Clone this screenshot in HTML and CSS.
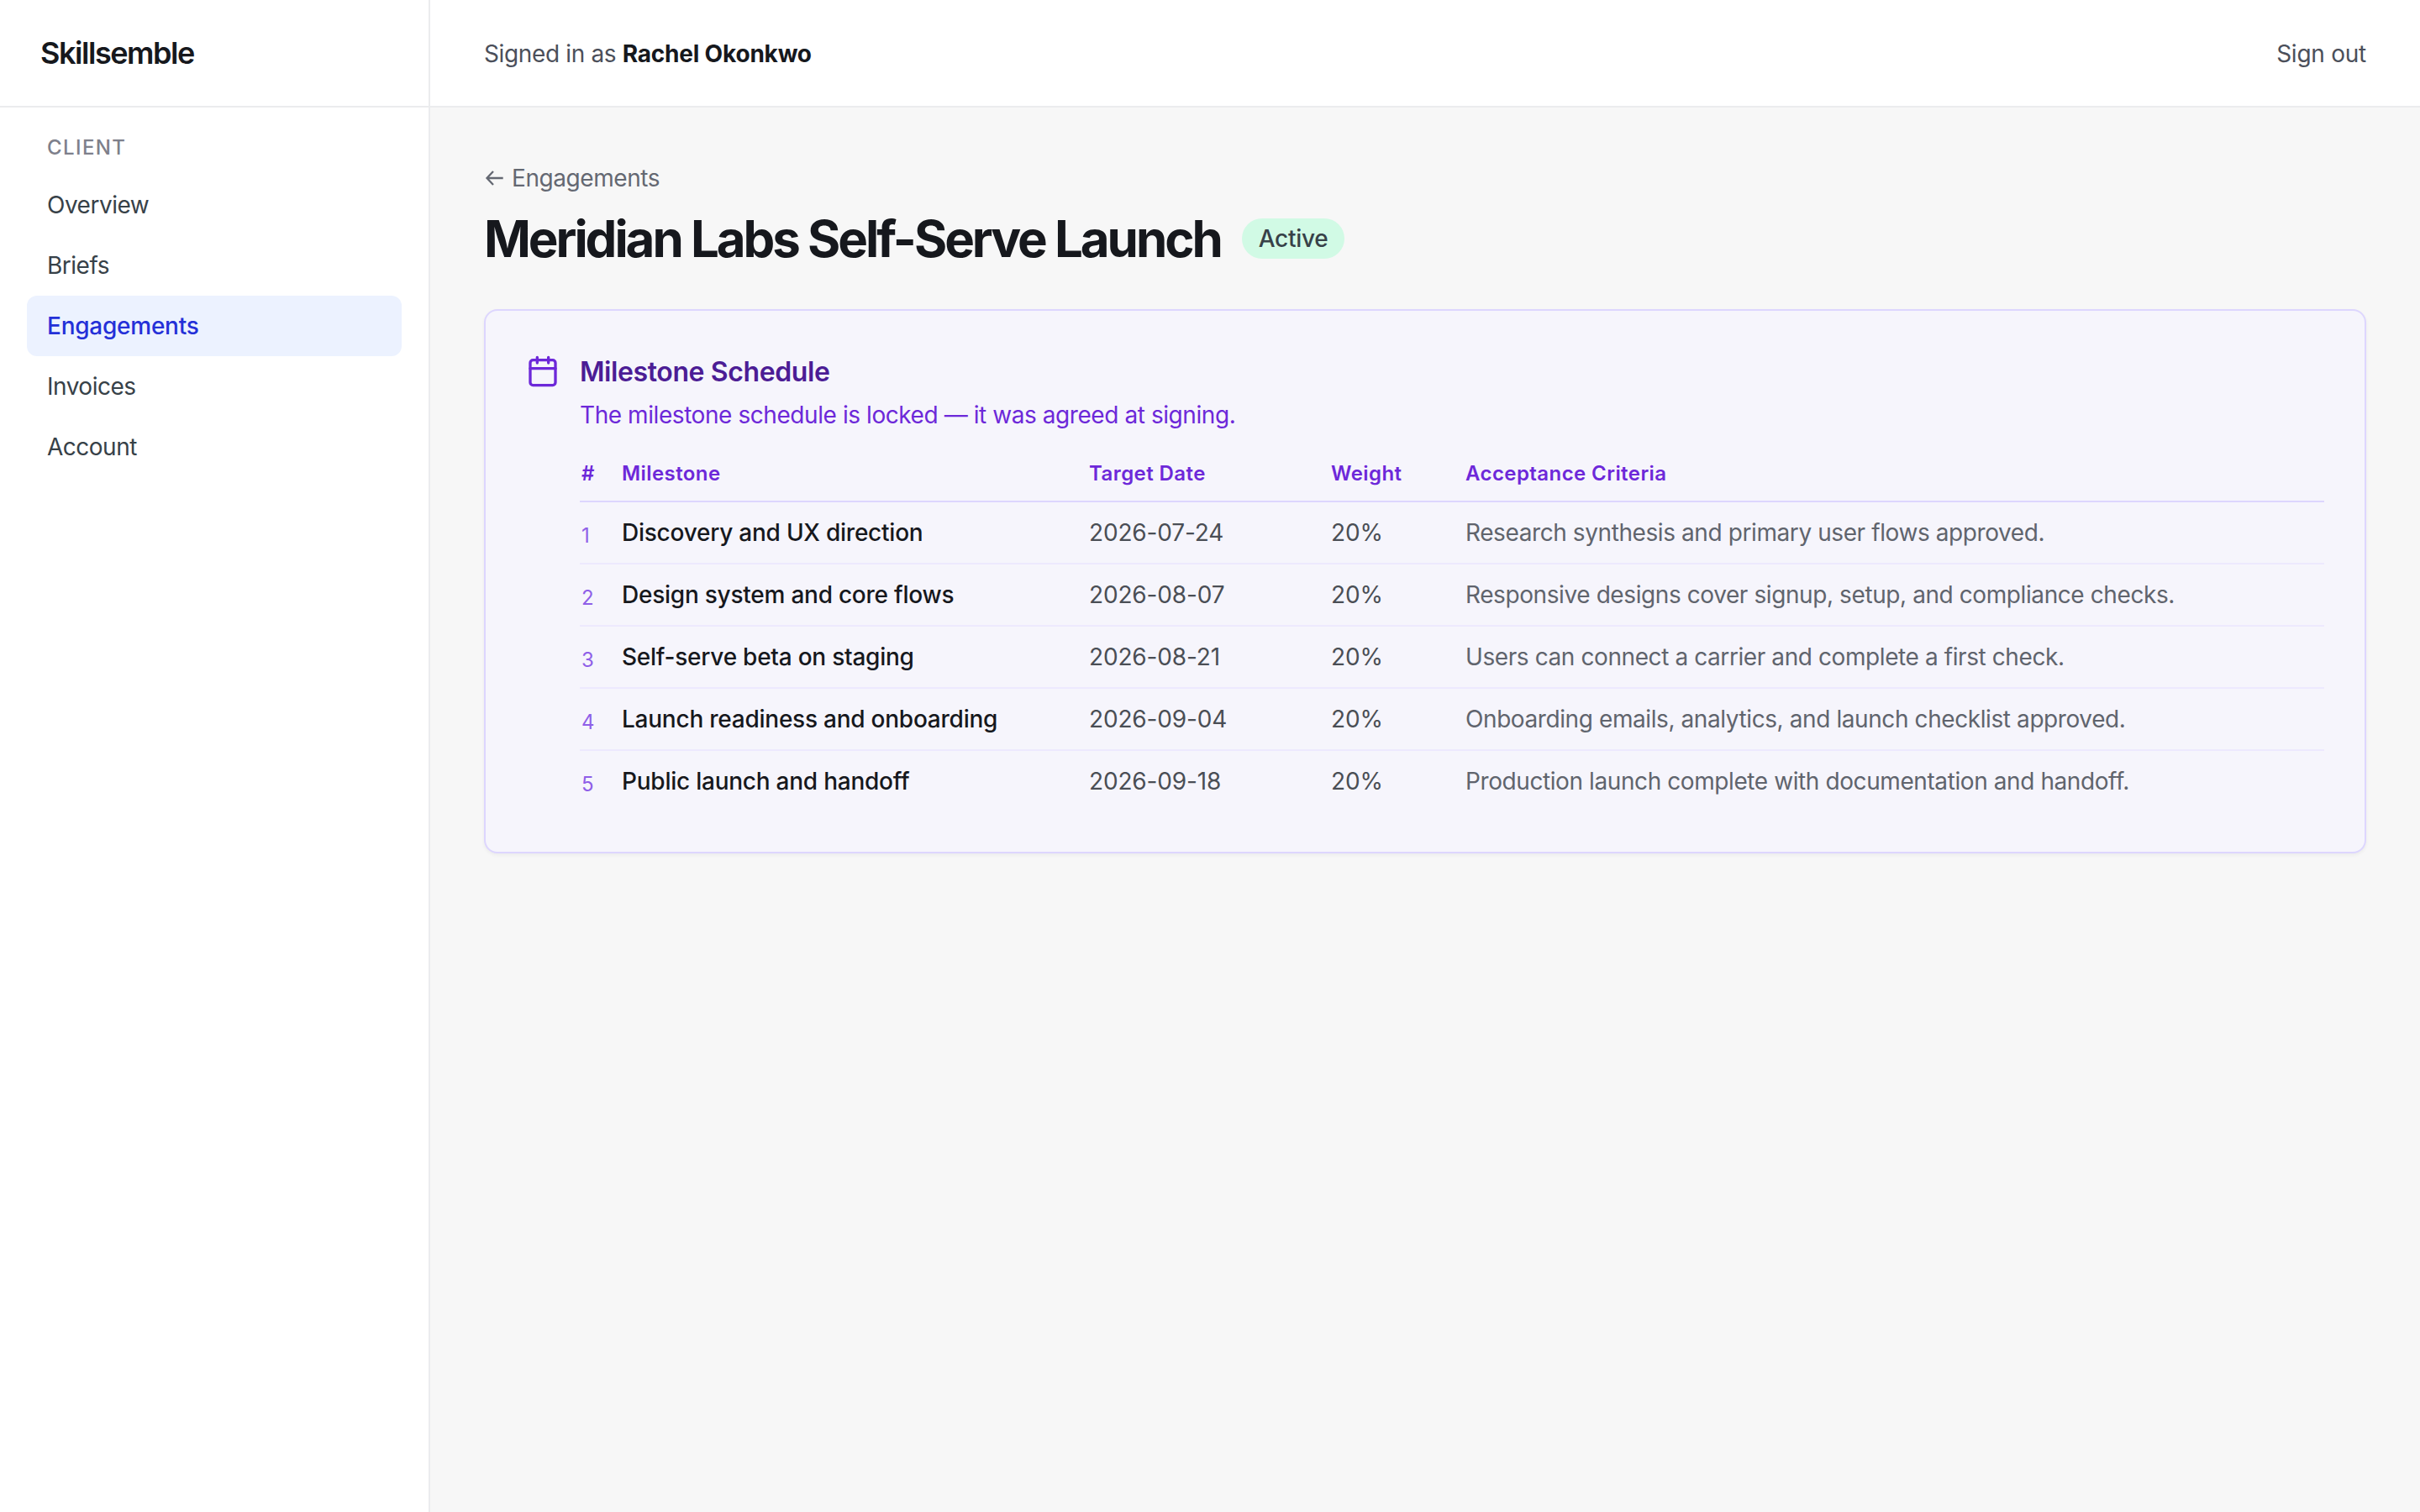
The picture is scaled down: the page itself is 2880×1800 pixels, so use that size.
FILE: index.html
```
<!DOCTYPE html>
<html lang="en">
<head>
    <meta charset="UTF-8">
    <meta name="viewport" content="width=device-width, initial-scale=1.0">
    <title>Meridian Labs Self-Serve Launch - Skillsemble</title>
    <link rel="stylesheet" href="styles.css">
</head>
<body>

<div class="app">
    <!-- Sidebar -->
    <aside class="sidebar">
        <div class="brand"><a href="#">Skillsemble</a></div>
        <nav class="nav">
            <p class="nav-label">CLIENT</p>
            <a href="#" class="nav-link">Overview</a>
            <a href="#" class="nav-link">Briefs</a>
            <a href="#" class="nav-link active">Engagements</a>
            <a href="#" class="nav-link">Invoices</a>
            <a href="#" class="nav-link">Account</a>
        </nav>
    </aside>

    <div class="main">
        <header class="topbar">
            <p class="signed-in">Signed in as <strong>Rachel Okonkwo</strong></p>
            <button type="button" class="sign-out">Sign out</button>
        </header>

        <main class="content">
            <a href="#" class="back-link">
                <svg class="back-arrow" viewBox="0 0 24 24" fill="none" stroke="currentColor">
                    <path d="M22.7 12H4M11 4L3.5 12l7.5 8"/>
                </svg>
                <span>Engagements</span>
            </a>
            <div class="title-row">
                <h1>Meridian Labs Self-Serve Launch</h1>
                <span class="badge">Active</span>
            </div>

            <!-- Milestone schedule -->
            <section class="card">
                <svg class="card-icon" viewBox="0 0 24 24" fill="none" stroke="currentColor" stroke-width="2" stroke-linecap="round" stroke-linejoin="round">
                    <path d="M8 2v4M16 2v4"/>
                    <rect x="3" y="4" width="18" height="18" rx="2"/>
                    <path d="M3 10h18"/>
                </svg>
                <div class="card-body">
                    <h2>Milestone Schedule</h2>
                    <p class="card-note">The milestone schedule is locked — it was agreed at signing.</p>
                    <table class="milestones">
                        <colgroup>
                            <col class="col-num">
                            <col class="col-name">
                            <col class="col-date">
                            <col class="col-weight">
                            <col>
                        </colgroup>
                        <thead>
                            <tr>
                                <th>#</th>
                                <th>Milestone</th>
                                <th>Target Date</th>
                                <th>Weight</th>
                                <th>Acceptance Criteria</th>
                            </tr>
                        </thead>
                        <tbody>
                            <tr>
                                <td class="num">1</td>
                                <td class="name">Discovery and UX direction</td>
                                <td>2026-07-24</td>
                                <td>20%</td>
                                <td class="criteria">Research synthesis and primary user flows approved.</td>
                            </tr>
                            <tr>
                                <td class="num">2</td>
                                <td class="name">Design system and core flows</td>
                                <td>2026-08-07</td>
                                <td>20%</td>
                                <td class="criteria">Responsive designs cover signup, setup, and compliance checks.</td>
                            </tr>
                            <tr>
                                <td class="num">3</td>
                                <td class="name">Self-serve beta on staging</td>
                                <td>2026-08-21</td>
                                <td>20%</td>
                                <td class="criteria">Users can connect a carrier and complete a first check.</td>
                            </tr>
                            <tr>
                                <td class="num">4</td>
                                <td class="name">Launch readiness and onboarding</td>
                                <td>2026-09-04</td>
                                <td>20%</td>
                                <td class="criteria">Onboarding emails, analytics, and launch checklist approved.</td>
                            </tr>
                            <tr>
                                <td class="num">5</td>
                                <td class="name">Public launch and handoff</td>
                                <td>2026-09-18</td>
                                <td>20%</td>
                                <td class="criteria">Production launch complete with documentation and handoff.</td>
                            </tr>
                        </tbody>
                    </table>
                </div>
            </section>
        </main>
    </div>
</div>

</body>
</html>
```
FILE: styles.css
```
* {
    margin: 0;
    padding: 0;
    box-sizing: border-box;
}

body {
    font-family: Inter, sans-serif;
    font-size: 28px;
    line-height: 40px;
    letter-spacing: -0.43px;
    color: #16181d;
    background-color: #f7f7f7;
}

a {
    color: inherit;
    text-decoration: none;
}

.app {
    display: flex;
    min-height: 100vh;
}

/* Sidebar */
.sidebar {
    width: 512px;
    flex-shrink: 0;
    background-color: #fff;
    border-right: 2px solid #ebecee;
}

.brand {
    display: flex;
    align-items: center;
    height: 128px;
    padding: 0 48px;
    border-bottom: 2px solid #ebecee;
    font-size: 36px;
    font-weight: 600;
    letter-spacing: -1.45px;
}

.nav {
    display: flex;
    flex-direction: column;
    padding: 32px;
}

.nav-label {
    padding: 0 24px;
    margin-bottom: 16px;
    font-size: 24px;
    font-weight: 450;
    line-height: 32px;
    letter-spacing: 1.4px;
    color: #7e808b;
}

.nav-link {
    padding: 16px 24px;
    border-radius: 12px;
    letter-spacing: -0.5px;
    color: #374148;
}

.nav-link.active {
    background-color: #ecf2ff;
    color: #2430d8;
    font-weight: 500;
    letter-spacing: -0.25px;
}

/* Top bar */
.main {
    flex: 1;
    min-width: 0;
}

.topbar {
    display: flex;
    align-items: center;
    justify-content: space-between;
    height: 128px;
    padding: 2px 64px 0;
    background-color: #fff;
    border-bottom: 2px solid #ebecee;
    color: #4b4f5a;
}

.signed-in {
    letter-spacing: -0.36px;
}

.signed-in strong {
    font-weight: 700;
    letter-spacing: -0.2px;
    color: #16181d;
}

.sign-out {
    border: none;
    background: none;
    font: inherit;
    letter-spacing: -0.25px;
    color: inherit;
    cursor: pointer;
}

.content {
    padding: 64px;
}

.back-link {
    display: flex;
    align-items: center;
    gap: 9px;
    margin-bottom: 16px;
    color: #646872;
}

.back-arrow {
    width: 24px;
    height: 24px;
    stroke-width: 2.3;
}

.title-row {
    display: flex;
    align-items: center;
    gap: 25px;
    margin-bottom: 48px;
}

h1 {
    font-size: 60px;
    font-weight: 700;
    line-height: 72px;
    letter-spacing: -3.04px;
}

.badge {
    padding: 4px 20px;
    border-radius: 24px;
    background-color: #d1fae5;
    color: #374148;
    font-weight: 500;
    letter-spacing: -0.3px;
}

/* Milestone card */
.card {
    display: flex;
    gap: 24px;
    padding: 48px;
    background-color: #f6f5fc;
    border: 2px solid #ddd6fe;
    border-radius: 16px;
    box-shadow: 0 2px 4px rgba(0, 0, 0, 0.05);
}

.card-icon {
    width: 40px;
    height: 40px;
    margin-top: 4px;
    flex-shrink: 0;
    color: #6d28d9;
}

.card-body {
    flex: 1;
}

h2 {
    font-size: 32px;
    font-weight: 600;
    line-height: 50px;
    letter-spacing: -0.4px;
    color: #4c1d95;
}

.card-note {
    margin-top: 6px;
    color: #6d28d9;
}

.milestones {
    width: 100%;
    margin-top: 34px;
    table-layout: fixed;
    border-spacing: 0;
    text-align: left;
    color: #4a4e55;
}

.col-num {
    width: 48px;
}

.col-name {
    width: 556px;
}

.col-date {
    width: 288px;
}

.col-weight {
    width: 160px;
}

.milestones th {
    padding: 0 0 16px 2px;
    border-bottom: 2px solid #ddd6fe;
    font-size: 24px;
    font-weight: 600;
    line-height: 32px;
    letter-spacing: 0.42px;
    color: #6d28d9;
}

.milestones td {
    padding: 16px 0 16px 2px;
    border-bottom: 2px solid #ede9fe;
    letter-spacing: -0.15px;
}

.milestones tr:last-child td {
    border-bottom: none;
}

.milestones .num {
    padding: 20px 0 12px 2px;
    font-size: 24px;
    vertical-align: bottom;
    color: #8f5fe8;
}

.milestones .name {
    color: #16181d;
    font-weight: 500;
    letter-spacing: -0.24px;
}

.milestones .criteria {
    color: #60646d;
    letter-spacing: -0.41px;
}
```
